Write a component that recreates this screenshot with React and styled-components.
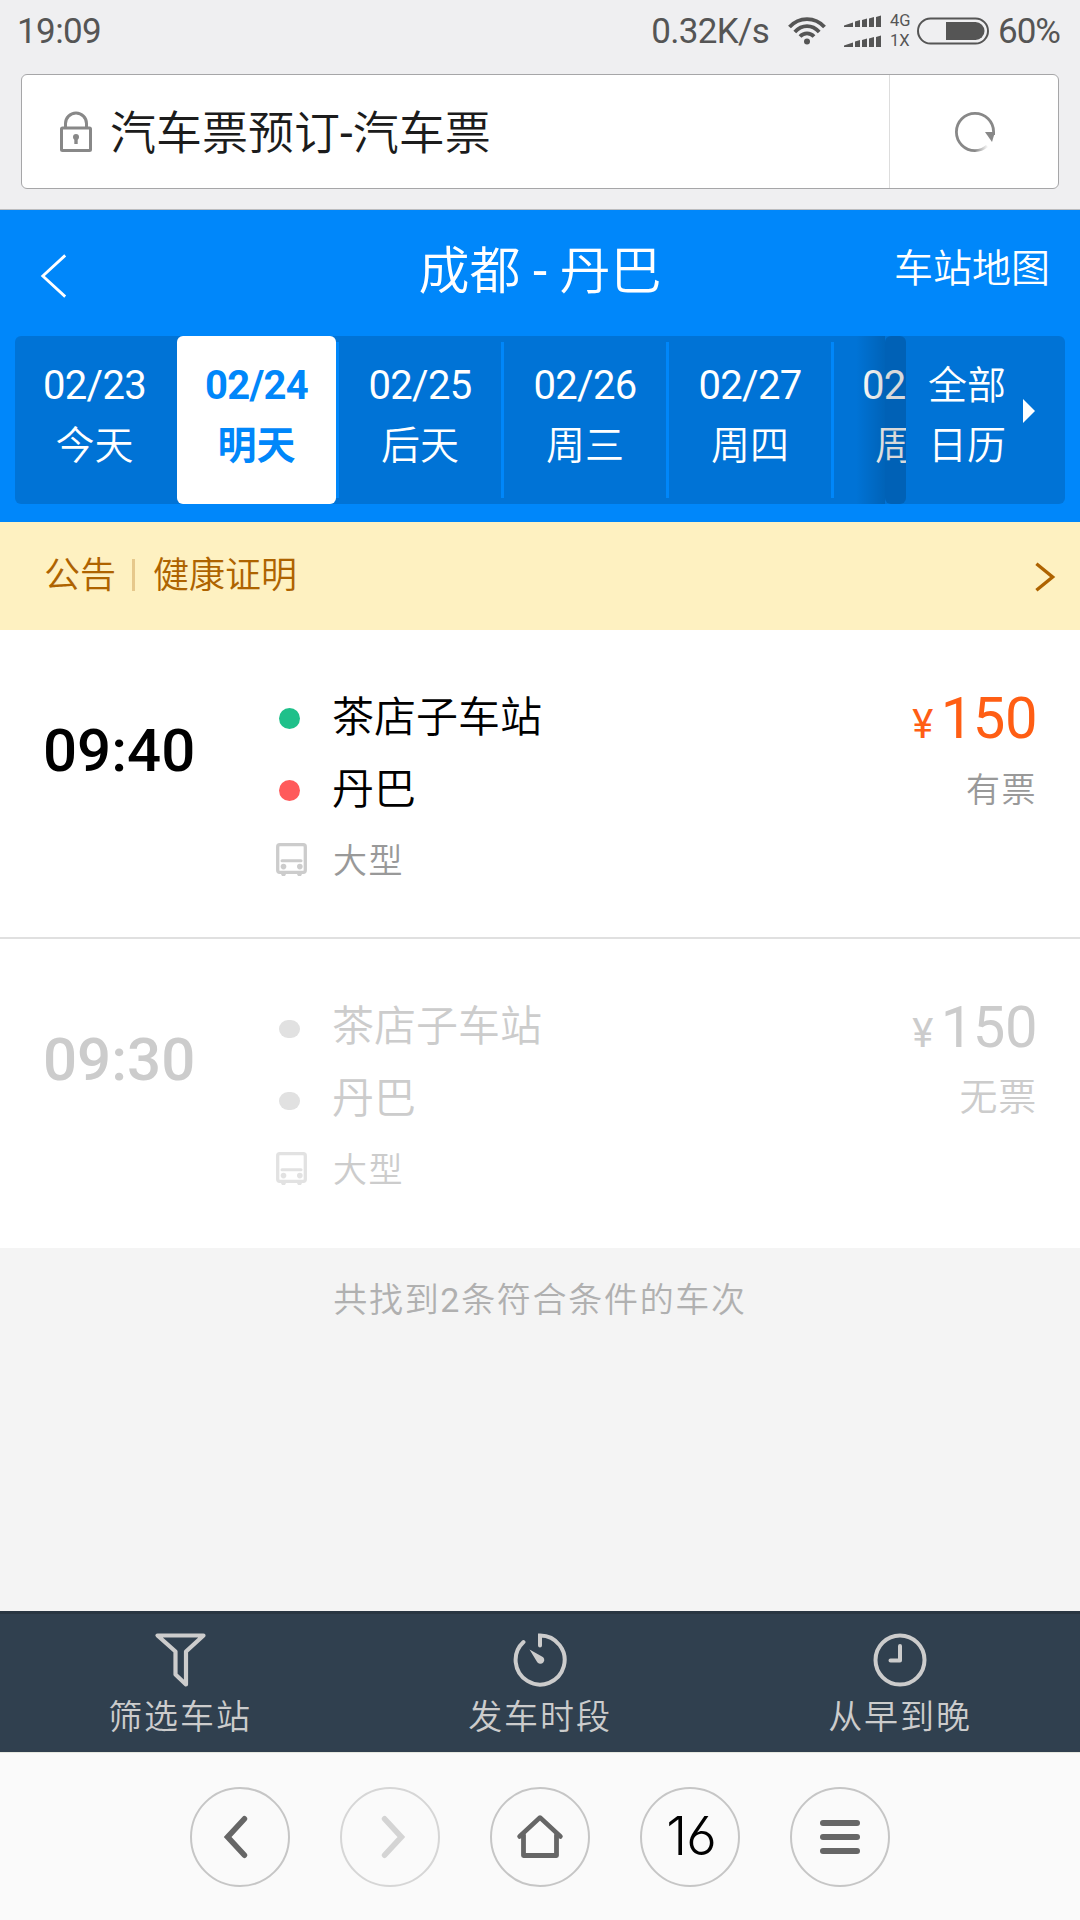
import React from "react";
import styled, { createGlobalStyle, css } from "styled-components";

const days = [
  { date: "02/23", label: "今天", first: true },
  { date: "02/24", label: "明天", active: true },
  { date: "02/25", label: "后天" },
  { date: "02/26", label: "周三" },
  { date: "02/27", label: "周四" },
  { date: "02", label: "周", cut: true },
];

const trips = [
  { time: "09:40", from: "茶店子车站", to: "丹巴", type: "大型", price: 150, stock: "有票" },
  { time: "09:30", from: "茶店子车站", to: "丹巴", type: "大型", price: 150, stock: "无票", soldOut: true },
];

const SignalBars = () => (
  <svg width="38" height="13" viewBox="0 0 38 13" fill="#555">
    <path d="M0 12V10.500L9 7.500V12ZM11 12V6.500L16 5V12ZM18 12V5L23 3.500V12ZM25 12V3.500L30 2V12ZM32 12V2L37 0.500V12Z" />
  </svg>
);

const WifiIcon = () => (
  <svg width="38" height="30" viewBox="0 0 38 30" fill="none" stroke="#555" strokeWidth="3.8">
    <path d="M1.5 11C11 0.4 27 0.4 36.500 11" />
    <path d="M6.800 16C14 8.200 24 8.200 31.200 16" />
    <path d="M12 20.500C16 16.300 22 16.300 26 20.500" />
    <circle cx="19" cy="25.500" r="3" fill="#555" stroke="none" />
  </svg>
);

const BatteryIcon = () => (
  <svg width="72" height="28" viewBox="0 0 72 28">
    <rect x="1" y="1.500" width="70" height="25" rx="12.500" fill="none" stroke="#555" strokeWidth="2" />
    <path d="M29 5H58.500A9 9 0 0 1 58.500 23H29Z" fill="#555" />
  </svg>
);

const LockIcon = () => (
  <svg width="32" height="41" viewBox="0 0 32 41" fill="none" stroke="#888" strokeWidth="3">
    <rect x="1.500" y="17" width="29" height="22.500" rx="1" />
    <path d="M5.500 17V12.500a10.500 10.500 0 0 1 21 0V17" />
    <circle cx="16" cy="26" r="3" fill="#888" stroke="none" />
    <path d="M16 26V33" strokeWidth="3.400" />
  </svg>
);

const ReloadIcon = () => (
  <svg width="42" height="42" viewBox="0 0 42 42" fill="none" stroke="#888" strokeWidth="2.800">
    <defs>
      <linearGradient id="fade" x1="21" y1="0" x2="33" y2="0" gradientUnits="userSpaceOnUse">
        <stop offset="0" stopColor="#888" />
        <stop offset="1" stopColor="#888" stopOpacity="0.100" />
      </linearGradient>
    </defs>
    <path d="M21 39.600A18.600 18.600 0 1 1 39.600 21V24" />
    <path d="M21 39.600A18.600 18.600 0 0 0 33 35" stroke="url(#fade)" />
    <path d="M31 21H41L38 31Z" fill="#888" stroke="none" />
  </svg>
);

const BusIcon = ({ color }) => (
  <svg width="31" height="34" viewBox="0 0 31 34" fill="none" stroke={color} strokeWidth="3.300">
    <rect x="1.700" y="1.700" width="27.600" height="27.600" rx="2" />
    <path d="M6 17.800H25" strokeLinecap="round" strokeWidth="3" />
    <g fill={color} stroke="none">
      <circle cx="7.500" cy="23.600" r="2.800" />
      <circle cx="23.800" cy="23.600" r="2.800" />
      <path d="M4.500 30H10.500L9 33H6ZM20.500 30H26.500L25 33H22Z" />
    </g>
  </svg>
);

const FilterIcon = () => (
  <svg width="54" height="54" viewBox="0 0 54 54" fill="none" stroke="#ccc" strokeWidth="4.200" strokeLinejoin="round">
    <path d="M4.500 2.500H50.500L33 18.500V51.500L22.500 41.500V18.500Z" />
  </svg>
);

const TimerIcon = () => (
  <svg width="54" height="54" viewBox="0 0 54 54" fill="none" stroke="#ccc" strokeWidth="4" strokeLinecap="round">
    <path d="M10.500 9A24.500 24.500 0 1 0 27 2.500V12.500" />
    <path d="M16.500 16.500L28.500 23.200A3.900 3.900 0 1 1 23.800 28.500Z" fill="#ccc" stroke="none" />
  </svg>
);

const ClockIcon = () => (
  <svg width="54" height="54" viewBox="0 0 54 54" fill="none" stroke="#ccc" strokeWidth="4" strokeLinecap="round" strokeLinejoin="round">
    <circle cx="27" cy="27" r="24.500" />
    <path d="M27 13V27.500H17.500" />
  </svg>
);

const Chevron = ({ width, height, stroke, weight, left, cap = "butt" }) => {
  const pad = weight;
  const near = left ? width - pad : pad;
  const far = left ? pad : width - pad;
  return (
    <svg width={width} height={height} fill="none" stroke={stroke} strokeWidth={weight} strokeLinecap={cap}>
      <path d={`M${near} ${pad / 2 + 1}L${far} ${height / 2}L${near} ${height - pad / 2 - 1}`} />
    </svg>
  );
};

const HomeIcon = () => (
  <svg width="48" height="46" viewBox="0 0 48 46" fill="none" stroke="#666" strokeWidth="4.800" strokeLinecap="round">
    <path d="M3.500 22.500L24 3.500L44.500 22.500" strokeLinejoin="round" strokeWidth="4.500" />
    <path d="M7.500 21V41.500H40.500V21" strokeLinejoin="round" />
  </svg>
);

const App = () => {
  return (
    <Screen>
      <GlobalStyle />
      <StatusBar>
        <Clock>19:09</Clock>
        <Speed>0.32K/s</Speed>
        <WifiIcon />
        <Signals>
          <SignalBars />
          <SignalBars />
        </Signals>
        <Network>
          <span>4G</span>
          <span>1X</span>
        </Network>
        <BatteryIcon />
        <Percent>60%</Percent>
      </StatusBar>
      <AddressWrap>
        <AddressBar>
          <Address>
            <LockIcon />
            <p>
              汽车票预订<Latin>-</Latin>汽车票
            </p>
          </Address>
          <Reload>
            <ReloadIcon />
          </Reload>
        </AddressBar>
      </AddressWrap>

      <Header>
        <TitleRow>
          <Back>
            <Chevron width={28} height={46} stroke="#fff" weight={2.8} left />
          </Back>
          <h1>
            成都 <Latin>-</Latin> 丹巴
          </h1>
          <MapLink>车站地图</MapLink>
        </TitleRow>
        <DateBar>
          <DateList>
            {days.map((day) => (
              <Day key={day.date} $first={day.first} $active={day.active} $cut={day.cut}>
                <span>{day.date}</span>
                <span>{day.label}</span>
              </Day>
            ))}
            <Shade />
          </DateList>
          <Calendar>
            <p>
              全部
              <br />
              日历
            </p>
            <Triangle />
          </Calendar>
        </DateBar>
      </Header>

      <Notice>
        <span>公告</span>
        <i />
        <span className="text">健康证明</span>
        <Chevron width={23} height={32} stroke="#ae6300" weight={3.4} />
      </Notice>

      {trips.map((trip) => (
        <Trip key={trip.time} $off={trip.soldOut}>
          <Time>{trip.time}</Time>
          <Route>
            <Stop>
              <Dot $color={trip.soldOut ? "#e1e1e1" : "#1fc08a"} $flat={trip.soldOut} />
              <span>{trip.from}</span>
            </Stop>
            <Stop>
              <Dot $color={trip.soldOut ? "#e1e1e1" : "#ff5a5b"} $flat={trip.soldOut} />
              <span>{trip.to}</span>
            </Stop>
            <Kind $off={trip.soldOut}>
              <BusIcon color={trip.soldOut ? "#e2e2e2" : "#ccc"} />
              <span>{trip.type}</span>
            </Kind>
          </Route>
          <Fare $off={trip.soldOut}>
            <Price>
              <small>¥</small>
              {trip.price}
            </Price>
            <Stock $off={trip.soldOut}>{trip.stock}</Stock>
          </Fare>
        </Trip>
      ))}

      <Summary>
        共找到<Latin>{trips.length}</Latin>条符合条件的车次
      </Summary>

      <Tabs>
        <Tab>
          <FilterIcon />
          <span>筛选车站</span>
        </Tab>
        <Tab>
          <TimerIcon />
          <span>发车时段</span>
        </Tab>
        <Tab>
          <ClockIcon />
          <span>从早到晚</span>
        </Tab>
      </Tabs>

      <BrowserNav>
        <RoundButton>
          <Shift $x={-4}>
            <Chevron width={28} height={44} stroke="#666" weight={5.6} left cap="round" />
          </Shift>
        </RoundButton>
        <RoundButton $disabled>
          <Shift $x={3}>
            <Chevron width={28} height={44} stroke="#d4d4d4" weight={5.6} cap="round" />
          </Shift>
        </RoundButton>
        <RoundButton>
          <HomeIcon />
        </RoundButton>
        <RoundButton>
          <PageCount>16</PageCount>
        </RoundButton>
        <RoundButton>
          <Menu>
            <i />
            <i />
            <i />
          </Menu>
        </RoundButton>
      </BrowserNav>
    </Screen>
  );
};

const GlobalStyle = createGlobalStyle`
  * {
    box-sizing: border-box;
    margin: 0;
    padding: 0;
  }
  body {
    font-family: Roboto, "Noto Sans CJK SC", sans-serif;
    font-weight: 350;
  }
  svg {
    display: block;
    flex-shrink: 0;
  }
`;

const Screen = styled.div`
  width: 1080px;
  height: 1920px;
  display: flex;
  flex-direction: column;
  overflow: hidden;
  background: #f4f4f4;
`;

const Latin = styled.span`
  font-weight: 400;
`;

const StatusBar = styled.div`
  height: 74px;
  padding: 1px 20px 13px 17px;
  display: flex;
  align-items: center;
  background: #efeff1;
  color: #555;
  font-weight: 400;
  font-size: 35px;
  line-height: 60px;
`;

const Clock = styled.span`
  flex: 1;
  padding-top: 1px;
  letter-spacing: -0.6px;
`;

const Speed = styled.span`
  margin-right: 19px;
  padding-top: 1px;
  letter-spacing: -0.7px;
`;

const Signals = styled.div`
  display: flex;
  flex-direction: column;
  gap: 7px;
  margin-left: 18px;
`;

const Network = styled.div`
  width: 27px;
  margin-left: 8px;
  display: flex;
  flex-direction: column;
  font-size: 16.500px;
  line-height: 20px;
`;

const Percent = styled.span`
  margin-left: 9px;
  padding-top: 1px;
  letter-spacing: -1px;
`;

const AddressWrap = styled.div`
  height: 136px;
  padding: 0 21px;
  background: #efeff1;
  border-bottom: 1px solid #bcbcbe;
`;

const AddressBar = styled.div`
  height: 115px;
  display: flex;
  background: #fff;
  border: 1px solid #a6a6a8;
  border-radius: 6px;
`;

const Address = styled.div`
  flex: 1;
  padding-left: 38px;
  display: flex;
  align-items: center;
  p {
    margin-left: 18px;
    padding-top: 3px;
    color: #1c1c1c;
    font-size: 46px;
    line-height: 60px;
  }
`;

const Reload = styled.div`
  width: 169px;
  padding-left: 2px;
  display: flex;
  align-items: center;
  justify-content: center;
  border-left: 1px solid #ddd;
`;

const Header = styled.div`
  height: 312px;
  padding: 0 15px;
  background: #0087fa;
  color: #fff;
`;

const TitleRow = styled.div`
  height: 126px;
  display: grid;
  grid-template-columns: 1fr auto 1fr;
  align-items: center;
  h1 {
    padding-bottom: 2px;
    font-size: 51px;
    font-weight: 350;
    line-height: 70px;
  }
`;

const Back = styled.div`
  padding: 6px 0 0 25px;
`;

const MapLink = styled.span`
  padding: 0 15px 8px 0;
  text-align: right;
  font-size: 39px;
  line-height: 60px;
`;

const DateBar = styled.div`
  height: 168px;
  display: flex;
  border-radius: 6px;
  background: #0073d6;
  overflow: hidden;
`;

const DateList = styled.div`
  width: 891px;
  position: relative;
  display: flex;
  overflow: hidden;
`;

const Day = styled.div`
  flex: 0 0 165px;
  padding: 20px 3px 0 0;
  display: flex;
  flex-direction: column;
  align-items: center;
  font-size: 39px;
  line-height: 60px;
  background: linear-gradient(#0087fa, #0087fa) right 50% / 3px 156px no-repeat;
  span:first-child {
    font-weight: 400;
    font-size: 40px;
    letter-spacing: -0.7px;
  }
  ${(p) =>
    p.$first &&
    css`
      flex-basis: 162px;
      background: none;
    `}
  ${(p) =>
    p.$cut &&
    css`
      flex-basis: 72px;
      padding: 20px 0 0 28px;
      align-items: flex-start;
      background: none;
      span:last-child {
        margin-left: 13px;
      }
    `}
  ${(p) =>
    p.$active &&
    css`
      flex-basis: 162px;
      color: #0087fa;
      position: relative;
      z-index: 0;
      &::before {
        content: "";
        position: absolute;
        z-index: -1;
        inset: 0 3px 0 0;
        border-radius: 6px;
        background: #fff;
      }
      span,
      span:first-child {
        font-weight: 700;
      }
    `}
`;

/* dark edge over the last day, next to the calendar button */
const Shade = styled.div`
  position: absolute;
  top: 0;
  right: 0;
  width: 50px;
  height: 100%;
  padding-left: 29px;
  background: linear-gradient(to right, rgba(0, 0, 0, 0), rgba(0, 0, 0, 0.14)) 0 0 / 29px 100% no-repeat;
  &::after {
    content: "";
    display: block;
    height: 100%;
    border-radius: 6px;
    background: rgba(0, 0, 0, 0.15);
  }
`;

const Calendar = styled.div`
  flex: 1;
  padding: 20px 30px 0 22px;
  display: flex;
  justify-content: space-between;
  font-size: 39px;
  line-height: 60px;
`;

const Triangle = styled.i`
  margin-top: 43px;
  width: 0;
  height: 0;
  border: 12px solid transparent;
  border-left-color: #fff;
  border-right: 0;
`;

const Notice = styled.div`
  height: 108px;
  padding: 0 24px 0 44px;
  display: flex;
  align-items: center;
  background: #fef1c1;
  color: #ae6300;
  font-size: 36px;
  line-height: 60px;
  i {
    width: 3px;
    height: 32px;
    margin: 0 18px 2px 16px;
    background: #e6c88c;
  }
  .text {
    flex: 1;
  }
  svg {
    margin-top: 2px;
  }
`;

const Trip = styled.div`
  height: 309px;
  padding: 0 44px 0 43px;
  display: flex;
  background: #fff;
  color: ${(p) => (p.$off ? "#ccc" : "#000")};
  border-bottom: ${(p) => (p.$off ? "0" : "2px solid #e0e0e0")};
`;

const Time = styled.div`
  width: 232px;
  padding-top: 86px;
  font-size: 60px;
  font-weight: 500;
  line-height: 70px;
`;

const Route = styled.div`
  flex: 1;
  padding-top: 51px;
`;

const Stop = styled.div`
  height: 72px;
  padding-left: 4px;
  display: flex;
  align-items: center;
  font-size: 42px;
  line-height: 60px;
  span {
    padding-top: 2px;
  }
`;

const Dot = styled.i`
  width: 21px;
  height: ${(p) => (p.$flat ? "18px" : "21px")};
  margin-right: 32px;
  margin-top: ${(p) => (p.$flat ? "6px" : "3px")};
  border-radius: 11px;
  background: ${(p) => p.$color};
`;

const Kind = styled.div`
  height: 70px;
  padding-left: 1px;
  display: flex;
  align-items: center;
  gap: 26px;
  color: ${(p) => (p.$off ? "#ccc" : "#999")};
  font-size: 34px;
  line-height: 50px;
  letter-spacing: 1.500px;
  span {
    padding-top: 1px;
  }
`;

const Fare = styled.div`
  padding-top: 53px;
  text-align: right;
  color: ${(p) => (p.$off ? "#ccc" : "#ff5e14")};
`;

const Price = styled.div`
  height: 72px;
  margin-right: -1px;
  font-size: 58px;
  font-weight: 400;
  line-height: 70px;
  letter-spacing: -0.500px;
  small {
    margin-right: 8px;
    font-size: 40px;
  }
`;

const Stock = styled.div`
  line-height: ${(p) => (p.$off ? "67px" : "70px")};
  color: ${(p) => (p.$off ? "#ccc" : "#999")};
  font-size: ${(p) => (p.$off ? "38px" : "34px")};
  letter-spacing: ${(p) => (p.$off ? "0.8px" : "1.5px")};
  margin-right: -1px;
`;

const Summary = styled.p`
  flex: 1;
  padding-top: 22px;
  text-align: center;
  color: #b0b0b0;
  font-size: 34px;
  line-height: 60px;
  letter-spacing: 1.700px;
`;

const Tabs = styled.div`
  height: 141px;
  display: flex;
  background: #30404f;
  border-top: 3px solid #293642;
`;

const Tab = styled.div`
  flex: 1;
  padding-top: 19px;
  display: flex;
  flex-direction: column;
  align-items: center;
  color: #ccc;
  font-size: 34px;
  line-height: 60px;
  letter-spacing: 1.900px;
`;

const BrowserNav = styled.div`
  height: 168px;
  display: flex;
  align-items: center;
  justify-content: center;
  gap: 50px;
  background: #fafafa;
  border-top: 1px solid #e6e8e0;
`;

const RoundButton = styled.div`
  width: 100px;
  height: 100px;
  display: flex;
  align-items: center;
  justify-content: center;
  border: 2px solid ${(p) => (p.$disabled ? "#d6d6d6" : "#c6c6c6")};
  border-radius: 50%;
`;

const Shift = styled.span`
  margin-left: ${(p) => p.$x * 2}px;
`;

const PageCount = styled.span`
  margin: 0 0 2px 2px;
  font-family: Inter, sans-serif;
  font-feature-settings: "ss01", "cv03", "cv06";
  font-size: 53px;
  font-weight: 350;
  letter-spacing: -1px;
  color: #000;
`;

const Menu = styled.div`
  width: 40px;
  display: flex;
  flex-direction: column;
  gap: 8px;
  i {
    height: 6px;
    border-radius: 3px;
    background: #666;
  }
`;

export default App;
